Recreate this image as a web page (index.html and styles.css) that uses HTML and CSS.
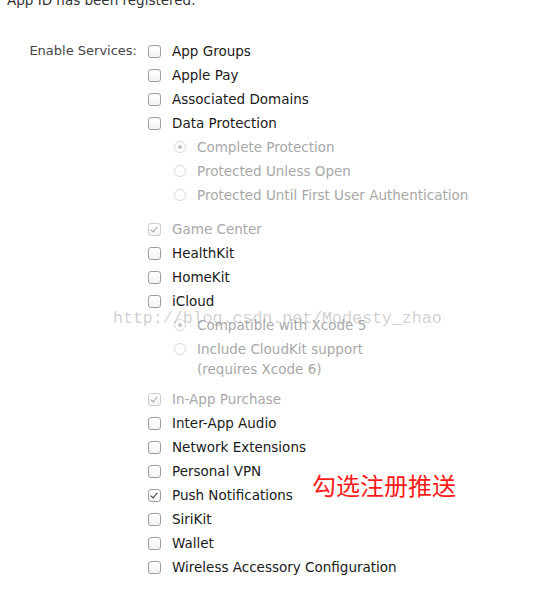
FILE: index.html
```html
<!DOCTYPE html>
<html>
<head>
<meta charset="utf-8">
<link rel="stylesheet" href="styles.css">
</head>
<body>
<div class="page">
  <p class="note">App ID has been registered.</p>
  <div class="form">
    <div class="label">Enable Services:</div>
    <ul class="services">
      <li class="row"><span class="cb"></span>App Groups</li>
      <li class="row"><span class="cb"></span>Apple Pay</li>
      <li class="row"><span class="cb"></span>Associated Domains</li>
      <li class="row"><span class="cb"></span>Data Protection</li>
      <li class="sub sub-dp">
        <div class="row dis"><span class="radio on"></span>Complete Protection</div>
        <div class="row dis"><span class="radio"></span>Protected Unless Open</div>
        <div class="row dis"><span class="radio"></span>Protected Until First User Authentication</div>
      </li>
      <li class="row dis"><span class="cb checked"></span>Game Center</li>
      <li class="row"><span class="cb"></span>HealthKit</li>
      <li class="row"><span class="cb"></span>HomeKit</li>
      <li class="row"><span class="cb"></span>iCloud</li>
      <li class="sub sub-ic">
        <div class="row dis"><span class="radio on"></span>Compatible with Xcode 5</div>
        <div class="row dis wrap"><span class="radio"></span><span>Include CloudKit support<br>(requires Xcode 6)</span></div>
      </li>
      <li class="row dis"><span class="cb checked"></span>In-App Purchase</li>
      <li class="row"><span class="cb"></span>Inter-App Audio</li>
      <li class="row"><span class="cb"></span>Network Extensions</li>
      <li class="row"><span class="cb"></span>Personal VPN</li>
      <li class="row"><span class="cb checked"></span>Push Notifications</li>
      <li class="row"><span class="cb"></span>SiriKit</li>
      <li class="row"><span class="cb"></span>Wallet</li>
      <li class="row"><span class="cb"></span>Wireless Accessory Configuration</li>
    </ul>
  </div>
  <div class="watermark">http://blog.csdn.net/Modesty_zhao</div>
  <div class="annot">勾选注册推送</div>
</div>
</body>
</html>
```
FILE: styles.css
```css
html, body {
  margin: 0;
  padding: 0;
  background: #fff;
}
.page {
  position: relative;
  width: 537px;
  height: 615px;
  overflow: hidden;
  font-family: "DejaVu Sans", "Noto Sans", sans-serif;
  font-size: 13.5px;
  color: #1a1a1a;
}
.note {
  margin: -9px 0 0 7px;
  line-height: 18px;
  color: #333;
}
.form {
  display: flex;
  margin-top: 30px;
}
.label {
  width: 137px;
  text-align: right;
  line-height: 24px;
  font-size: 13px;
  color: #444;
  flex: none;
}
.services {
  list-style: none;
  margin: 0 0 0 11px;
  padding: 0;
}
.row {
  display: flex;
  align-items: center;
  height: 24px;
}
.dis {
  color: #a8a8a8;
}
.cb {
  box-sizing: border-box;
  width: 13px;
  height: 13px;
  border: 1px solid #9e9e9e;
  border-radius: 3px;
  background: linear-gradient(#fff, #f3f3f3);
  margin-right: 11px;
  position: relative;
  flex: none;
}
.dis .cb {
  border-color: #cdcdcd;
}
.cb.checked::after {
  content: "";
  position: absolute;
  left: 3px;
  top: 1px;
  width: 3px;
  height: 6px;
  border-right: 1.5px solid #333;
  border-bottom: 1.5px solid #333;
  transform: rotate(40deg);
}
.dis .cb.checked::after {
  border-color: #a5a5a5;
}
.sub .row {
  padding-left: 26px;
}
.sub-dp {
  margin-bottom: 10px;
}
.sub-ic {
  margin-bottom: 6px;
}
.radio {
  box-sizing: border-box;
  width: 12px;
  height: 12px;
  border: 1px solid #dadada;
  border-radius: 50%;
  margin-right: 11px;
  position: relative;
  flex: none;
}
.radio.on::after {
  content: "";
  position: absolute;
  left: 3px;
  top: 3px;
  width: 4px;
  height: 4px;
  border-radius: 50%;
  background: #c2c2c2;
}
.row.wrap {
  height: auto;
  align-items: flex-start;
  line-height: 20px;
  padding-top: 2px;
  padding-bottom: 2px;
}
.row.wrap .radio {
  margin-top: 4px;
}
.watermark {
  position: absolute;
  left: 113px;
  top: 309px;
  font-family: "Liberation Mono", monospace;
  font-size: 16.6px;
  line-height: 20px;
  color: rgba(150, 150, 150, 0.45);
  white-space: nowrap;
}
.annot {
  position: absolute;
  left: 312px;
  top: 470px;
  font-family: "Noto Sans CJK SC", sans-serif;
  font-size: 24px;
  line-height: 30px;
  color: #ff1a1a;
  white-space: nowrap;
}
```
